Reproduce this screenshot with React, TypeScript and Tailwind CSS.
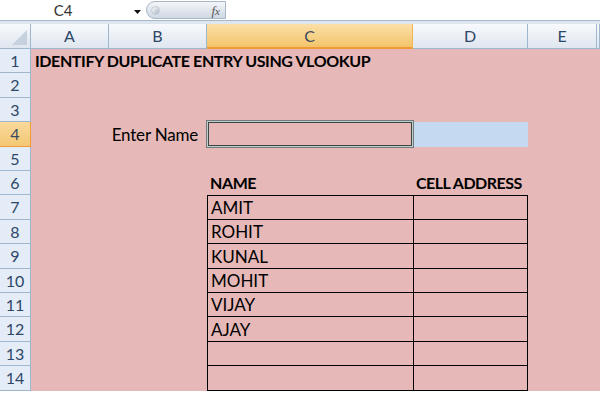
import React from 'react';

type Row = {
  h: string;
};

const rowHeights = ['h-[24px]', 'h-[25px]', 'h-[24px]', 'h-[25px]', 'h-[24px]', 'h-[24px]', 'h-[25px]', 'h-[24px]', 'h-[25px]', 'h-[24px]', 'h-[24px]', 'h-[25px]', 'h-[24px]', 'h-[25px]'];

const names = ['AMIT', 'ROHIT', 'KUNAL', 'MOHIT', 'VIJAY', 'AJAY', '', ''];

const cols = ['A', 'B', 'C', 'D', 'E', ''];

const FormulaBar: React.FC = () => (
  <div className="h-[24px] flex flex-col">
    <div className="h-[20px] flex bg-white">
      <div className="w-[146px] relative flex items-center">
        <span className="w-[126px] text-center text-[15px] text-[#333] leading-none">C4</span>
        <svg className="absolute left-[134px] top-[10px]" width="7" height="4" viewBox="0 0 7 4">
          <path d="M0 0H7L3.5 4Z" fill="#111" />
        </svg>
      </div>
      <div className="w-[80px] h-[18px] mt-[1px] rounded-l-[9px] border border-[#a9b6c7] bg-gradient-to-b from-[#f4f6f9] to-[#cfd8e3] flex items-center justify-between pl-[4px] pr-[5px]">
        <span className="w-[9px] h-[9px] rounded-full bg-gradient-to-br from-[#ffffff] to-[#aab4c0] border border-[#c2cbd6]" />
        <span className="font-['Liberation_Serif',serif] italic text-[13px] text-[#555] leading-none">
          f<span className="text-[11px]">x</span>
        </span>
      </div>
      <div className="flex-1 bg-white" />
    </div>
    <div className="h-[1px] bg-[#a8b8cc]" />
    <div className="h-[3px] bg-[#dde5ef]" />
  </div>
);

const App: React.FC = () => {
  const rows: Row[] = rowHeights.map((h) => ({ h }));

  return (
    <div className="w-[600px] h-[393px] overflow-hidden bg-white font-['Lato',sans-serif]">
      <FormulaBar />
      <div className="grid grid-cols-[31px_78px_98px_206px_115px_69px_1fr]">
        {/* column header */}
        <div className="h-[25px] relative bg-gradient-to-b from-[#f7f9fc] to-[#dfe6ef] border-r border-b border-[#9eb6ce]">
          <svg className="absolute right-[3px] bottom-[3px]" width="15" height="15" viewBox="0 0 15 15">
            <path d="M15 0V15H0Z" fill="#c5d1df" />
          </svg>
        </div>
        {cols.map((c, i) =>
          c === 'C' ? (
            <div key={i} className="h-[25px] flex items-center justify-center bg-gradient-to-b from-[#fadfa8] to-[#f3c56a] border-r border-b-2 border-r-[#f2b655] border-b-[#f29b36] text-[16px] text-[#3a4a5f]">
              {c}
            </div>
          ) : (
            <div key={i} className="h-[25px] flex items-center justify-center bg-gradient-to-b from-[#f7f9fc] to-[#dfe6ef] border-r border-b border-[#9eb6ce] text-[16px] text-[#2c4768]">
              {c}
            </div>
          )
        )}

        {rows.map((r, idx) => {
          const n = idx + 1;
          const sel = n === 4;
          const tIdx = n - 7;
          const inTable = tIdx >= 0;
          return (
            <React.Fragment key={n}>
              <div
                className={`${r.h} flex items-center justify-center border-r border-b text-[16px] ${
                  sel ? 'bg-gradient-to-b from-[#f9d99c] to-[#f4c873] border-[#f29b36] text-[#3a4a5f]' : 'bg-[#e4ecf7] border-[#9eb6ce] text-[#2c4768]'
                }`}
              >
                {n}
              </div>
              {/* A */}
              <div className={`${r.h} bg-[#e6b8b7] relative`}>
                {n === 1 && (
                  <span className="absolute left-[4px] bottom-[4px] whitespace-nowrap font-bold text-[16px] tracking-[-0.4px] leading-none text-black">
                    IDENTIFY DUPLICATE ENTRY USING VLOOKUP
                  </span>
                )}
              </div>
              {/* B */}
              <div className={`${r.h} bg-[#e6b8b7] flex items-end justify-end pr-[9px] pb-[4px]`}>
                {n === 4 && <span className="text-[17px] tracking-[-0.2px] leading-none text-black">Enter Name</span>}
              </div>
              {/* C */}
              {n === 4 ? (
                <div className={`${r.h} bg-[#e6b8b7] relative`}>
                  <div className="absolute -left-[1px] -top-[2px] -right-[1px] -bottom-[1px] border border-[#6f7e7d] shadow-[inset_0_0_0_1px_#c3cccb,inset_0_0_0_2px_#3a4747]" />
                </div>
              ) : n === 6 ? (
                <div className={`${r.h} bg-[#e6b8b7] flex items-end pl-[3px] pb-[4px]`}>
                  <span className="font-bold text-[16px] tracking-[-0.4px] leading-none text-black">NAME</span>
                </div>
              ) : inTable ? (
                <div className={`${r.h} bg-[#e6b8b7] flex items-end pl-[3px] pb-[3px] border-l border-b border-black ${tIdx === 0 ? 'border-t' : ''}`}>
                  <span className="text-[17px] leading-none text-black">{names[tIdx]}</span>
                </div>
              ) : (
                <div className={`${r.h} bg-[#e6b8b7]`} />
              )}
              {/* D */}
              {n === 4 ? (
                <div className={`${r.h} bg-[#c5d9f1]`} />
              ) : n === 6 ? (
                <div className={`${r.h} bg-[#e6b8b7] flex items-end pl-[3px] pb-[4px]`}>
                  <span className="font-bold text-[16px] tracking-[-0.5px] leading-none text-black whitespace-nowrap">CELL ADDRESS</span>
                </div>
              ) : inTable ? (
                <div className={`${r.h} bg-[#e6b8b7] border-l border-r border-b border-black ${tIdx === 0 ? 'border-t' : ''}`} />
              ) : (
                <div className={`${r.h} bg-[#e6b8b7]`} />
              )}
              {/* E */}
              <div className={`${r.h} bg-[#e6b8b7]`} />
              <div className={`${r.h} bg-[#e6b8b7]`} />
            </React.Fragment>
          );
        })}
      </div>
    </div>
  );
};

export default App;
